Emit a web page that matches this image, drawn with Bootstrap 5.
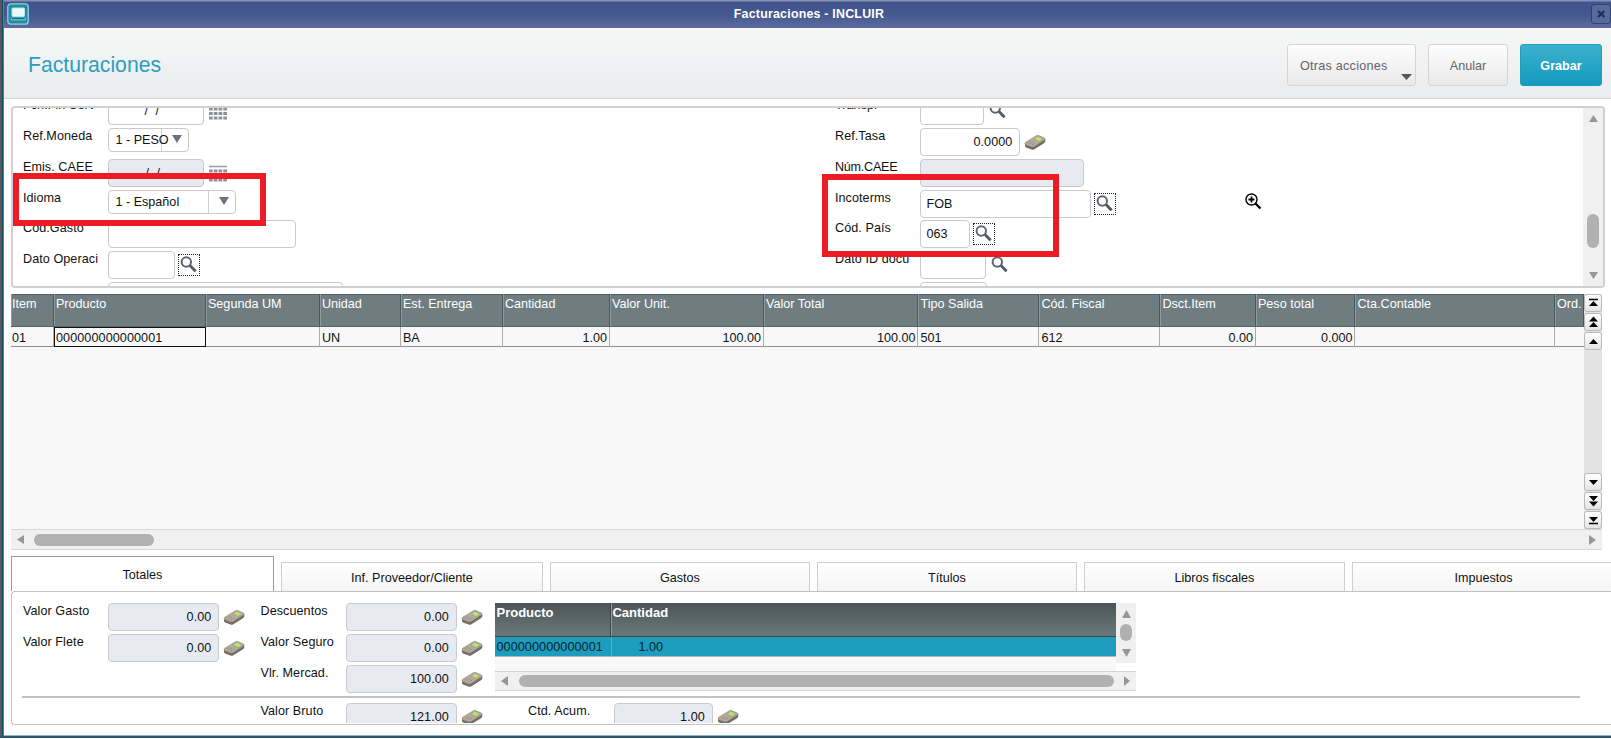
<!DOCTYPE html>
<html lang="es">
<head>
<meta charset="utf-8">
<title>Facturaciones - INCLUIR</title>
<link href="https://cdn.jsdelivr.net/npm/bootstrap@5.3.0/dist/css/bootstrap.min.css" rel="stylesheet">
<script src="https://cdn.jsdelivr.net/npm/bootstrap@5.3.0/dist/js/bootstrap.bundle.min.js"></script>
<style>
body{width:1611px;height:739px;overflow:hidden;background:#fff;color:#111;font:12.6px/16px "Liberation Sans",Arial,sans-serif}
.win{height:738px;border-bottom:2px solid #2f5876;box-shadow:inset 0 -1px #8db8cc}
.edge{width:4px;background:linear-gradient(90deg,#5b565c 0 2px,#0d4a63 2px 3px,#3c8ba6 3px)}
.titlebar{height:28px;background:linear-gradient(#8591b4 0 1px,#42548d 2px,#45578f 50%,#5c6c9f);color:#fff;font-weight:700;font-size:12.4px;letter-spacing:.22px}
.appicon{width:22px;height:22px;margin:3px 0 0 3px}
.closer{width:20px;height:20px;margin-top:4px;border:1px solid #2d4276;border-radius:3px;background:#596999}
.head{height:71px;background:linear-gradient(#f5f7f7,#ebecee);border-bottom:1px solid #d3d4d8;padding:16px 9px 0 24px}
.head h1{font-size:21.2px;line-height:24px;color:#2ba0be;margin:9px 0 0}
.hbtn{height:42px;padding:2px 0 0;font-size:12.6px;color:#64656a;border:1px solid #d4d5d7;border-radius:3px;background:linear-gradient(#fdfdfd,#e9e9ea)}
.hbtn.go{color:#fff;font-weight:700;border-color:#1e9dbd;background:linear-gradient(#3db0cd,#129bbf)}
.formbox{margin:7px 6px 0 7px;height:182px;border:2px solid #d0d0d0;border-radius:4px}
.rows{margin-top:-11px;padding-left:10px}
.frow{height:30.85px}
.flabel{width:85.5px;flex:none;white-space:nowrap;letter-spacing:.07px}
.half{width:812px;flex:none}
.fin{height:28px;border:1.5px solid #c9cace;border-radius:4px;background:#fff;padding:0 6px 0 5px;line-height:26px;flex:none}
.fin.ro{background:#e7eaf1}
.num{text-align:right;padding-right:7px}
.sel{height:24px;padding:0 0 0 6px;line-height:22px;position:relative}
.sel i{position:absolute;top:0;bottom:0;width:1px;background:#cfd0d4}
.sel svg{position:absolute;top:6px}
.lens{width:22px;height:22px;margin:3px 0 0 3px;flex:none}
.lens.dot{outline:1.3px dotted #222;outline-offset:-1px}
.calc{width:22px;height:17px;margin:6px 0 0 4px;flex:none}
.cal{width:18px;height:20px;margin:6px 0 0 5px;flex:none}
.trk{background:#f0f0f0}
.thumb{background:#b1b1b1;border-radius:6px}
.tri{fill:#969696}
.gridbox{margin:6px 9px 0 7px;height:235px;background:#f8f8f8}
.gt{display:grid;grid-template-columns:43px 152px 114px 81px 102px 107px 154px 154.5px 121px 121px 95.5px 99.5px 199.5px 29px;width:1573px}
.gh{height:33px;background:#6f7d81;color:#fff;padding:2px 0 0 2px;border-right:1px solid #4b585d;box-shadow:inset 1px 0 #8d999c,inset 0 1px #566166;border-bottom:1px solid #59636a;white-space:nowrap;overflow:hidden}
.gc{height:20px;padding:2px 2px 0 2px;line-height:18px;border-right:1px solid #acaeae;border-bottom:1px solid #8e9090;white-space:nowrap}
.gc.cur{outline:1.5px solid #111;outline-offset:-1px}
.gc:first-child,.gh:first-child,.gc.first{padding-left:1px}
.gc:last-child,.gh:last-child{border-right:0}
.digits{letter-spacing:.09px}
.nb{width:18px;height:18px;margin-bottom:1px;border:1px solid #b9b9b9;border-radius:3px;background:linear-gradient(#fff,#e4e4e4);display:block}
.tabs{margin:6px 0 0 7px;height:35px}
.tabx{height:29px;border:1px solid #cfcfcf;border-bottom:0;background:linear-gradient(#fff,#f5f5f5);display:flex;align-items:center;justify-content:center;margin-right:7px;padding-top:2px;flex:none}
.tabx.on{height:35px;border-color:#9b9b9b;background:#fff}
.foot{margin-left:7px;height:134px;border:1px solid #c2c2c2;border-width:1.5px 0 1.5px 1.5px;border-radius:4px 0 0 4px}
.mini{width:641px;height:88px}
.mh{height:34px;background:linear-gradient(#4c5558,#6b787b);border-bottom:1px solid #3d474a;color:#fff;font-weight:700;font-size:13px;padding:2px 0 0 1px}
.mr{height:20px;background:#1d9cbe;color:#06222c;border-bottom:1px solid #b9b4b0;padding:2px 0 0 1px}
.hr2{height:2px;width:1558px;margin-left:10px;background:#c2c2c2}
.red{position:absolute;border:6px solid #ed1c24}
</style>
</head>
<body>
<svg width="0" height="0" class="position-absolute">
<symbol id="lens" viewBox="0 0 22 22"><circle cx="8.3" cy="8" r="4.7" fill="#fff" stroke="#5d6474" stroke-width="2"/><path d="M12 11.6l5.6 5.7" stroke="#505766" stroke-width="2.8"/></symbol>
<symbol id="calc" viewBox="0 0 22 17"><path d="M1 9.500v2.500q0 1 1 1.400l5.500 2.200q1.300.5 2.500-.2l10-6.200q1.300-.9 1.300-2V5z" fill="#756d64"/><path d="M1.500 8.300L12.300 1.700q1.200-.7 2.500-.2l5.700 2.600q1.200.7 0 1.700L10 12.500q-1.300.8-2.600.3L1.600 10.400q-1.400-1 0-2.100z" fill="#b5ada2" stroke="#958d82" stroke-width=".6"/><path d="M9.500 4.800l3.700-2.300q.8-.5 1.600-.1l4 1.900q.8.5 0 1.100l-3.500 2.300z" fill="#b9cf8b" stroke="#8d9a70" stroke-width=".6"/><path d="M11.800 4.900l2.400-1.400 3 1.400-2.300 1.500z" fill="#c5e46c"/><path d="M3.500 9l4-2.500M5.600 10l4.200-2.600M7.800 11l4.300-2.700" stroke="#8b8177" stroke-width=".9" stroke-dasharray="1.600 .8"/></symbol>
<symbol id="cal" viewBox="0 0 18 20"><path d="M0 1.5h18" stroke="#989ba6" stroke-width="1.6"/><path d="M0 6h18M0 10.5h18M0 15h18" stroke="#8d919d" stroke-width="3.2" stroke-dasharray="3.7 1.06"/></symbol>
</svg>
<div class="win d-flex position-relative">
<div class="edge"></div>
<div class="flex-grow-1" style="min-width:0">
 <div class="titlebar d-flex">
  <svg class="appicon" viewBox="0 0 22 22"><rect x=".8" y=".8" width="20.4" height="20.4" rx="3" fill="#248ba5" stroke="#8ed3e0" stroke-width="1.3"/><rect x="5" y="5" width="12.5" height="8.5" rx="1" fill="#e9f8fa" stroke="#b7e2e9"/><path d="M4 14.5h14.5l.7 3H3.4z" fill="#65b8c7"/><path d="M5 15.5h12.5" stroke="#176477"/></svg>
  <div class="flex-grow-1 text-center" style="padding:6px 2px 0 0">Facturaciones - INCLUIR</div>
  <div class="closer"><svg width="18" height="18" class="d-block"><path d="M6 6l6.4 6M12.4 6L6 12" stroke="#202d50" stroke-width="2.2"/></svg></div>
 </div>
 <div class="head d-flex">
  <h1 class="flex-grow-1 fw-normal">Facturaciones</h1>
  <button class="btn hbtn position-relative text-start" style="width:129px;padding-left:12px;letter-spacing:.25px">Otras acciones<svg class="position-absolute" style="right:3px;bottom:5px" width="11" height="6"><path d="M0 0h11L5.500 6z" fill="#55565c"/></svg></button>
  <button class="btn hbtn" style="width:80px;margin:0 12px">Anular</button>
  <button class="btn hbtn go" style="width:82px">Grabar</button>
 </div>

 <div class="formbox d-flex overflow-hidden">
  <div class="rows flex-grow-1">
   <div class="frow d-flex">
    <div class="half d-flex"><div class="flabel">Fch.Fin Serv</div><div class="fin" style="width:96px;padding-left:35px;word-spacing:4px">/ /</div><svg class="cal"><use href="#cal"/></svg></div>
    <div class="flabel">Transpr</div><div class="fin" style="width:64px"></div><svg class="lens"><use href="#lens"/></svg>
   </div>
   <div class="frow d-flex">
    <div class="half d-flex"><div class="flabel">Ref.Moneda</div><div class="fin sel" style="width:81px"><i style="left:52px"></i><span class="position-relative">1 - PESO</span><svg style="left:63px" width="10" height="8"><path d="M0 0h10L5 8z" fill="#6d7080"/></svg></div></div>
    <div class="flabel">Ref.Tasa</div><div class="fin num digits" style="width:100px">0.0000</div><svg class="calc"><use href="#calc"/></svg>
   </div>
   <div class="frow d-flex">
    <div class="half d-flex"><div class="flabel">Emis. CAEE</div><div class="fin ro" style="width:96px;padding-left:36px;word-spacing:4px">/ /</div><svg class="cal"><use href="#cal"/></svg></div>
    <div class="flabel" style="letter-spacing:-.25px">Núm.CAEE</div><div class="fin ro" style="width:164px"></div>
   </div>
   <div class="frow d-flex">
    <div class="half d-flex"><div class="flabel">Idioma</div><div class="fin sel" style="width:128px"><i style="left:99px"></i>1 - Español<svg style="left:110px" width="10" height="8"><path d="M0 0h10L5 8z" fill="#6d7080"/></svg></div></div>
    <div class="flabel">Incoterms</div><div class="fin" style="width:171px">FOB</div><svg class="lens dot"><use href="#lens"/></svg>
   </div>
   <div class="frow d-flex">
    <div class="half d-flex"><div class="flabel">Cód.Gasto</div><div class="fin" style="width:188px"></div></div>
    <div class="flabel">Cód. País</div><div class="fin" style="width:50px">063</div><svg class="lens dot"><use href="#lens"/></svg>
   </div>
   <div class="frow d-flex">
    <div class="half d-flex"><div class="flabel">Dato Operaci</div><div class="fin" style="width:67px"></div><svg class="lens dot"><use href="#lens"/></svg></div>
    <div class="flabel">Dato ID docu</div><div class="fin" style="width:66px"></div><svg class="lens"><use href="#lens"/></svg>
   </div>
   <div class="frow d-flex">
    <div class="half d-flex"><div class="flabel"></div><div class="fin" style="width:235px"></div></div>
    <div class="flabel"></div><div class="fin" style="width:67px"></div>
   </div>
  </div>
  <div class="trk d-flex flex-column align-items-center" style="width:20px">
   <svg width="9" height="7" style="margin-top:7px"><path class="tri" d="M4.500 0L9 7H0z"/></svg>
   <div class="thumb" style="width:12px;height:34px;margin-top:92px"></div>
   <svg width="9" height="7" style="margin-top:24px"><path class="tri" d="M0 0h9L4.500 7z"/></svg>
  </div>
 </div>

 <div class="gridbox d-flex">
  <div style="width:1573px">
   <div class="gt">
    <div class="gh">Item</div><div class="gh">Producto</div><div class="gh">Segunda UM</div><div class="gh">Unidad</div><div class="gh">Est. Entrega</div><div class="gh">Cantidad</div><div class="gh">Valor Unit.</div><div class="gh">Valor Total</div><div class="gh">Tipo Salida</div><div class="gh">Cód. Fiscal</div><div class="gh">Dsct.Item</div><div class="gh">Peso total</div><div class="gh">Cta.Contable</div><div class="gh">Ord.</div>
    <div class="gc first">01</div><div class="gc cur digits">000000000000001</div><div class="gc"></div><div class="gc">UN</div><div class="gc">BA</div><div class="gc text-end">1.00</div><div class="gc text-end">100.00</div><div class="gc text-end">100.00</div><div class="gc">501</div><div class="gc">612</div><div class="gc text-end">0.00</div><div class="gc text-end">0.000</div><div class="gc"></div><div class="gc"></div>
   </div>
  </div>
  <div class="d-flex flex-column" style="width:18px;background:#e3e3e3">
   <svg class="nb" viewBox="0 0 16 16"><path d="M4 4.500h9" stroke="#000" stroke-width="1.400"/><path d="M8.500 6l4.500 5H4z"/></svg>
   <svg class="nb" viewBox="0 0 16 16"><path d="M8.500 2.500l4.500 5H4zM8.500 8l4.500 5H4z"/></svg>
   <svg class="nb" viewBox="0 0 16 16"><path d="M8.500 6l4.500 5H4z"/></svg>
   <div class="flex-grow-1"></div>
   <svg class="nb" viewBox="0 0 16 16"><path d="M8.500 11L4 6h9z"/></svg>
   <svg class="nb" viewBox="0 0 16 16"><path d="M8.500 8L4 3h9zM8.500 13.500L4 8.500h9z"/></svg>
   <svg class="nb mb-0" viewBox="0 0 16 16"><path d="M8.500 10L4 5h9z"/><path d="M4 11.500h9" stroke="#000" stroke-width="1.400"/></svg>
  </div>
 </div>
 <div class="trk d-flex align-items-center" style="height:21px;margin:0 9px 0 7px;border:solid #d6d6d6;border-width:1.500px 0;padding:0 6px">
  <svg width="7" height="9"><path class="tri" d="M7 0v9L0 4.500z"/></svg>
  <div class="thumb" style="width:120px;height:12px;margin-left:10px"></div>
  <svg class="ms-auto" width="7" height="10"><path class="tri" d="M0 0v10L7 5z"/></svg>
 </div>

 <div class="tabs d-flex align-items-end overflow-hidden">
  <div class="tabx on" style="width:263px">Totales</div><div class="tabx" style="width:262px">Inf. Proveedor/Cliente</div><div class="tabx" style="width:260px">Gastos</div><div class="tabx" style="width:260px">Títulos</div><div class="tabx" style="width:261px">Libros fiscales</div><div class="tabx" style="width:263px">Impuestos</div>
 </div>
 <div class="foot overflow-hidden">
  <div class="d-flex" style="padding:11px 0 0 11px;height:104px">
   <div style="width:237.500px">
    <div class="frow d-flex"><div class="flabel">Valor Gasto</div><div class="fin ro num digits" style="width:111px">0.00</div><svg class="calc"><use href="#calc"/></svg></div>
    <div class="frow d-flex"><div class="flabel">Valor Flete</div><div class="fin ro num digits" style="width:111px">0.00</div><svg class="calc"><use href="#calc"/></svg></div>
   </div>
   <div style="width:235px">
    <div class="frow d-flex"><div class="flabel">Descuentos</div><div class="fin ro num digits" style="width:111px">0.00</div><svg class="calc"><use href="#calc"/></svg></div>
    <div class="frow d-flex"><div class="flabel">Valor Seguro</div><div class="fin ro num digits" style="width:111px">0.00</div><svg class="calc"><use href="#calc"/></svg></div>
    <div class="frow d-flex"><div class="flabel">Vlr. Mercad.</div><div class="fin ro num digits" style="width:111px">100.00</div><svg class="calc"><use href="#calc"/></svg></div>
   </div>
   <div class="mini">
    <div class="d-flex" style="height:68px">
     <div style="width:621px;background:#f8f8f8">
      <div class="d-flex"><div class="mh" style="width:116px;border-right:1px solid #39464a">Producto</div><div class="mh flex-grow-1" style="box-shadow:inset 1px 0 #919b9e">Cantidad</div></div>
      <div class="d-flex"><div class="mr digits" style="width:117px;border-right:1px solid #8a9da3">000000000000001</div><div class="mr flex-grow-1" style="padding-left:26px">1.00</div></div>
     </div>
     <div class="trk d-flex flex-column align-items-center" style="width:20px;height:60px">
      <svg width="9" height="8" style="margin-top:7px"><path class="tri" d="M4.500 0L9 8H0z"/></svg>
      <div class="thumb" style="width:12px;height:17px;margin-top:6px"></div>
      <svg width="9" height="8" style="margin-top:8px"><path class="tri" d="M0 0h9L4.500 8z"/></svg>
     </div>
    </div>
    <div class="trk d-flex align-items-center" style="height:20px;border:solid #d3d3d3;border-width:1px 0;padding:0 6px">
     <svg width="7" height="10"><path class="tri" d="M7 0v10L0 5z"/></svg>
     <div class="thumb" style="width:595px;height:12px;margin-left:11px"></div>
     <svg class="ms-auto" width="6" height="10"><path class="tri" d="M0 0v10L6 5z"/></svg>
    </div>
   </div>
  </div>
  <div class="hr2"></div>
  <div class="d-flex overflow-hidden" style="padding:5px 0 0 248.500px;height:25px">
   <div class="flabel">Valor Bruto</div><div class="fin ro num digits" style="width:111px">121.00</div><svg class="calc"><use href="#calc"/></svg>
   <div class="flabel" style="margin-left:45px;width:86px">Ctd. Acum.</div><div class="fin ro num digits" style="width:99px">1.00</div><svg class="calc"><use href="#calc"/></svg>
  </div>
 </div>
</div>
<!-- highlight frames and pointer drawn over the form -->
<div class="red" style="left:13px;top:173px;width:253px;height:53px"></div>
<div class="red" style="left:822px;top:174px;width:237px;height:83px"></div>
<svg class="position-absolute" style="left:1244px;top:192px" width="18" height="18"><circle cx="7.500" cy="7.500" r="5.500" fill="#fff" stroke="#000" stroke-width="1.400"/><path d="M4.500 7.500h6M7.500 4.500v6" stroke="#000" stroke-width="1.800"/><path d="M11.500 11.500l5 5" stroke="#000" stroke-width="2.200"/></svg>
</div>
</body>
</html>
